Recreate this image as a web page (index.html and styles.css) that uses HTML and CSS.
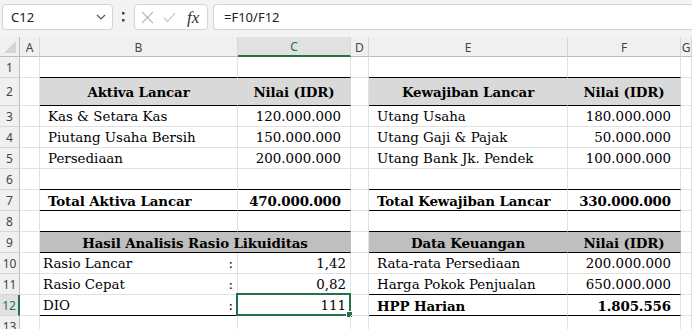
FILE: index.html
```html
<!DOCTYPE html>
<html>
<head>
<meta charset="utf-8">
<link rel="stylesheet" href="styles.css">
</head>
<body>
<div class="app">
  <div class="topbar">
    <div class="namebox">
      <span>C12</span>
      <svg class="chev" width="10" height="6" viewBox="0 0 10 6"><polyline points="1,1 5,5 9,1" fill="none" stroke="#555" stroke-width="1.2"/></svg>
    </div>
    <div class="grip">
      <svg width="3" height="12" viewBox="0 0 3 12"><rect x="0" y="1" width="2.5" height="2.5" fill="#444"/><rect x="0" y="8" width="2.5" height="2.5" fill="#444"/></svg>
    </div>
    <div class="fxbox">
      <svg class="ico" width="13" height="13" viewBox="0 0 13 13"><path d="M1 1 L12 12 M12 1 L1 12" stroke="#b9b9b9" stroke-width="1.1" fill="none"/></svg>
      <svg class="ico" width="13" height="11" viewBox="0 0 13 11"><polyline points="1,5.5 4.5,9.5 12,1" fill="none" stroke="#b9b9b9" stroke-width="1.1"/></svg>
      <span class="fx">fx</span>
    </div>
    <div class="formula">=F10/F12</div>
  </div>

  <div class="sheet">
    <!-- header row -->
    <div class="corner"><svg width="12" height="12" viewBox="0 0 12 12"><polygon points="12,0 12,12 0,12" fill="#d4d4d4"/></svg></div>
    <div class="ch">A</div>
    <div class="ch">B</div>
    <div class="ch sel">C</div>
    <div class="ch">D</div>
    <div class="ch">E</div>
    <div class="ch">F</div>
    <div class="ch">G</div>

    <!-- row 1 -->
    <div class="rh">1</div>
    <div class="c"></div>
    <div class="c bk"></div>
    <div class="c bk"></div>
    <div class="c"></div>
    <div class="c bk"></div>
    <div class="c bk"></div>
    <div class="c"></div>

    <!-- row 2 -->
    <div class="rh">2</div>
    <div class="c"></div>
    <div class="c bk f1 b mid ctr">Aktiva Lancar</div>
    <div class="c bk f1 b mid ctr">Nilai (IDR)</div>
    <div class="c"></div>
    <div class="c bk f1 b mid ctr">Kewajiban Lancar</div>
    <div class="c bk f1 b mid ctr">Nilai (IDR)</div>
    <div class="c"></div>

    <!-- row 3 -->
    <div class="rh">3</div>
    <div class="c"></div>
    <div class="c ind">Kas &amp; Setara Kas</div>
    <div class="c num">120.000.000</div>
    <div class="c"></div>
    <div class="c ind">Utang Usaha</div>
    <div class="c num">180.000.000</div>
    <div class="c"></div>

    <!-- row 4 -->
    <div class="rh">4</div>
    <div class="c"></div>
    <div class="c ind">Piutang Usaha Bersih</div>
    <div class="c num">150.000.000</div>
    <div class="c"></div>
    <div class="c ind">Utang Gaji &amp; Pajak</div>
    <div class="c num">50.000.000</div>
    <div class="c"></div>

    <!-- row 5 -->
    <div class="rh">5</div>
    <div class="c"></div>
    <div class="c ind">Persediaan</div>
    <div class="c num">200.000.000</div>
    <div class="c"></div>
    <div class="c ind">Utang Bank Jk. Pendek</div>
    <div class="c num">100.000.000</div>
    <div class="c"></div>

    <!-- row 6 -->
    <div class="rh">6</div>
    <div class="c"></div>
    <div class="c bk"></div>
    <div class="c bk"></div>
    <div class="c"></div>
    <div class="c bk"></div>
    <div class="c bk"></div>
    <div class="c"></div>

    <!-- row 7 -->
    <div class="rh">7</div>
    <div class="c"></div>
    <div class="c bk b ind">Total Aktiva Lancar</div>
    <div class="c bk b num">470.000.000</div>
    <div class="c"></div>
    <div class="c bk b ind">Total Kewajiban Lancar</div>
    <div class="c bk b num">330.000.000</div>
    <div class="c"></div>

    <!-- row 8 -->
    <div class="rh">8</div>
    <div class="c"></div>
    <div class="c bk"></div>
    <div class="c bk"></div>
    <div class="c"></div>
    <div class="c bk"></div>
    <div class="c bk"></div>
    <div class="c"></div>

    <!-- row 9 -->
    <div class="rh">9</div>
    <div class="c"></div>
    <div class="c bk f2 b ctr span2">Hasil Analisis Rasio Likuiditas</div>
    <div class="c"></div>
    <div class="c bk f2 b ctr">Data Keuangan</div>
    <div class="c bk f2 b ctr">Nilai (IDR)</div>
    <div class="c"></div>

    <!-- row 10 -->
    <div class="rh">10</div>
    <div class="c"></div>
    <div class="c lab"><span>Rasio Lancar</span><span>:</span></div>
    <div class="c val">1,42</div>
    <div class="c"></div>
    <div class="c ind">Rata-rata Persediaan</div>
    <div class="c num">200.000.000</div>
    <div class="c"></div>

    <!-- row 11 -->
    <div class="rh">11</div>
    <div class="c"></div>
    <div class="c lab"><span>Rasio Cepat</span><span>:</span></div>
    <div class="c val">0,82</div>
    <div class="c"></div>
    <div class="c bk ind">Harga Pokok Penjualan</div>
    <div class="c bk num">650.000.000</div>
    <div class="c"></div>

    <!-- row 12 -->
    <div class="rh rsel">12</div>
    <div class="c"></div>
    <div class="c bk lab"><span>DIO</span><span>:</span></div>
    <div class="c bk val active">111<span class="selbox"><span class="handle"></span></span></div>
    <div class="c"></div>
    <div class="c bk b ind">HPP Harian</div>
    <div class="c bk b num">1.805.556</div>
    <div class="c"></div>

    <!-- row 13 -->
    <div class="rh">13</div>
    <div class="c"></div>
    <div class="c"></div>
    <div class="c"></div>
    <div class="c"></div>
    <div class="c"></div>
    <div class="c"></div>
    <div class="c"></div>
  </div>
</div>
</body>
</html>
```

FILE: styles.css
```css
html, body {
  margin: 0;
  padding: 0;
  background: #ffffff;
  overflow: hidden;
}

.app {
  width: 692px;
  height: 329px;
  overflow: hidden;
}

.topbar {
  height: 37px;
  box-sizing: border-box;
  padding-top: 4px;
  display: flex;
  align-items: flex-start;
  background: #f3f3f3;
  font-family: "Noto Sans", "Open Sans", sans-serif;
}

.namebox {
  margin-left: 2px;
  width: 111px;
  height: 26px;
  box-sizing: border-box;
  background: #fff;
  border: 1px solid #d4d4d4;
  border-radius: 4px;
  display: flex;
  align-items: center;
  justify-content: space-between;
  padding: 0 6px 0 8px;
  font-size: 13px;
  color: #222;
}

.chev {
  display: block;
}

.grip {
  width: 21px;
  height: 26px;
  display: flex;
  align-items: center;
  justify-content: center;
}

.grip svg {
  display: block;
}

.fxbox {
  width: 74px;
  height: 26px;
  box-sizing: border-box;
  background: #fff;
  border: 1px solid #d4d4d4;
  border-radius: 4px;
  display: flex;
  align-items: center;
  padding-left: 6px;
  gap: 9px;
}

.ico {
  display: block;
}

.fx {
  font-family: "Liberation Serif", serif;
  font-style: italic;
  font-size: 17px;
  color: #333;
  margin-left: 2px;
  line-height: 1;
}

.formula {
  margin-left: 5px;
  flex: 1;
  height: 26px;
  box-sizing: border-box;
  background: #fff;
  border: 1px solid #d4d4d4;
  border-right: none;
  border-radius: 4px 0 0 4px;
  padding-left: 10px;
  display: flex;
  align-items: center;
  font-size: 13px;
  color: #222;
}

.sheet {
  display: grid;
  grid-template-columns: 20px 20px 198px 113px 18px 199px 113px 11px;
  grid-template-rows: 20px 21px 28px repeat(11, 21px);
  width: 692px;
}

.corner,
.ch,
.rh {
  box-sizing: border-box;
  background: #f0f0f0;
  font-family: "Noto Sans", "Open Sans", sans-serif;
  font-size: 12px;
  color: #444;
  display: flex;
  align-items: center;
  justify-content: center;
}

.corner {
  border-right: 1px solid #bdbdbd;
  border-bottom: 1px solid #bdbdbd;
  align-items: flex-end;
  justify-content: flex-end;
  padding: 0 3px 3px 0;
}

.corner svg {
  display: block;
}

.ch {
  border-right: 1px solid #d6d6d6;
  border-bottom: 1px solid #bdbdbd;
  padding-top: 1px;
}

.ch.sel {
  background: #e1e1e1;
  color: #217346;
  border-bottom: 2px solid #217346;
}

.rh {
  border-right: 1px solid #bdbdbd;
  border-bottom: 1px solid #d6d6d6;
}

.rh.rsel {
  background: #e1e1e1;
  color: #217346;
  border-right: 2px solid #217346;
}

.c {
  box-sizing: border-box;
  border-right: 1px solid #e1e1e1;
  border-bottom: 1px solid #e1e1e1;
  font-family: "DejaVu Serif", serif;
  font-size: 13.4px;
  line-height: 16px;
  color: #000;
  display: flex;
  align-items: flex-end;
  padding-bottom: 1px;
  white-space: nowrap;
  position: relative;
}

.bk {
  border-bottom-color: #000;
}

.f1 {
  background: #d9d9d9;
  border-right-color: #d9d9d9;
}

.f2 {
  background: #bfbfbf;
  border-right-color: #bfbfbf;
}

.b {
  font-weight: bold;
  letter-spacing: -0.12px;
}

.mid {
  align-items: center;
  padding-bottom: 0;
  padding-top: 1px;
}

.ctr {
  justify-content: center;
}

.span2 {
  grid-column: span 2;
}

.ind {
  padding-left: 8px;
}

.num {
  justify-content: flex-end;
  padding-right: 9px;
}

.lab {
  justify-content: space-between;
  padding-left: 3px;
  padding-right: 4px;
}

.val {
  justify-content: flex-end;
  padding-right: 4px;
}

.selbox {
  position: absolute;
  top: -2px;
  left: -2px;
  right: -1px;
  bottom: -1px;
  border: 2px solid #217346;
  pointer-events: none;
}

.handle {
  position: absolute;
  right: -4px;
  bottom: -4px;
  width: 5px;
  height: 5px;
  background: #217346;
  border: 1px solid #fff;
}
```
